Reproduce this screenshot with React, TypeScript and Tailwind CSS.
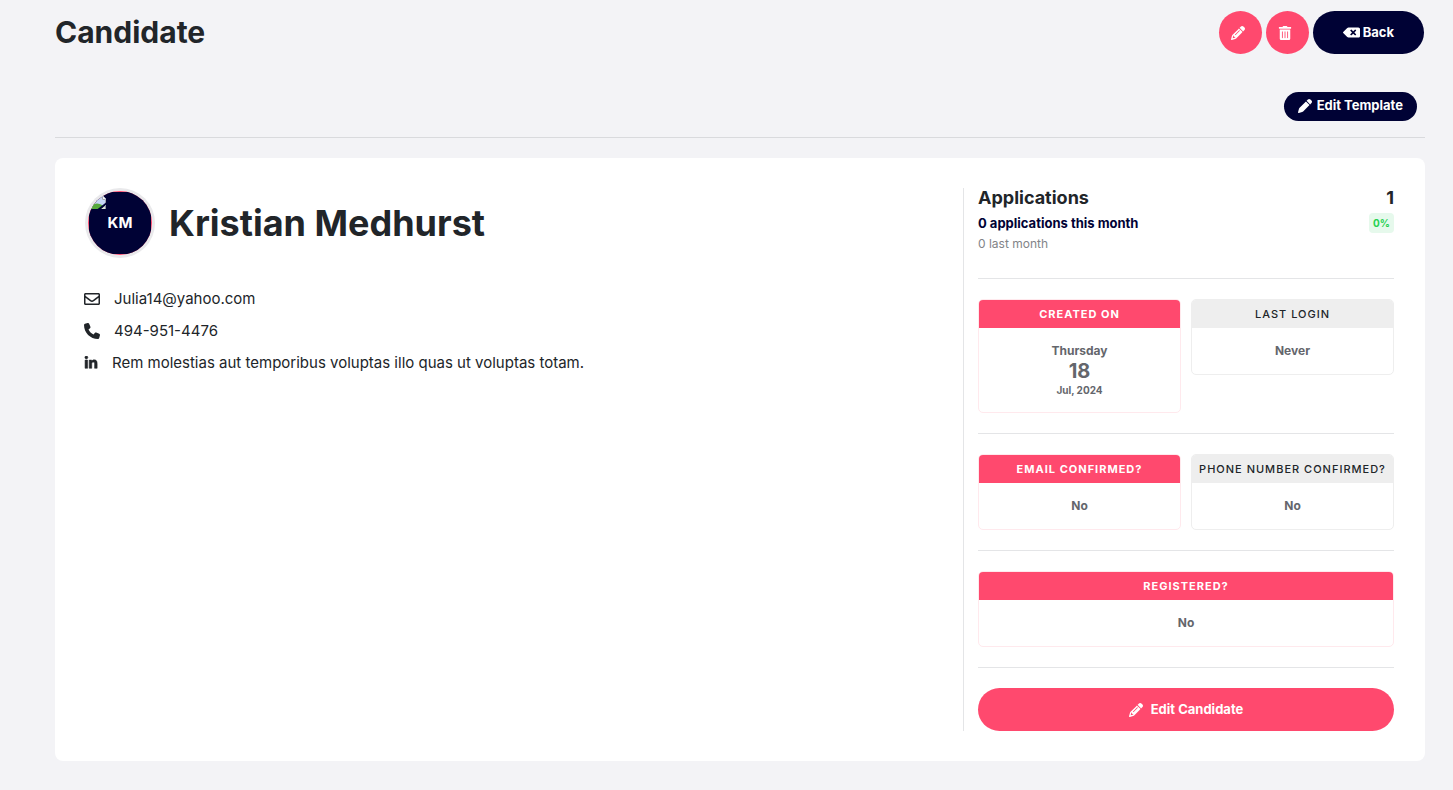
import type { ReactNode } from "react";
import { FaBackspace, FaLinkedinIn, FaRegEnvelope, FaTrashAlt } from "react-icons/fa";
import { FaPen, FaPencil, FaPhone } from "react-icons/fa6";

const CANDIDATE = {
  name: "Kristian Medhurst",
  initials: "KM",
  email: "Julia14@yahoo.com",
  phone: "494-951-4476",
  linkedin: "Rem molestias aut temporibus voluptas illo quas ut voluptas totam.",
};

function Avatar({ initials }: { initials: string }) {
  return (
    <div className="relative size-[70px] shrink-0">
      <svg viewBox="0 0 70 70" className="size-full" aria-hidden="true">
        <defs>
          <clipPath id="avatar-clip">
            <circle cx="35" cy="35" r="32" />
          </clipPath>
          <clipPath id="photo-clip">
            <path d="M5 8h13l3 3v10H5z" />
          </clipPath>
        </defs>
        <circle cx="35" cy="35" r="35" fill="#e9e9eb" />
        <g clipPath="url(#avatar-clip)">
          <rect x="3" y="3" width="64" height="64" fill="#ff496e" />
          <rect x="4" y="4" width="62" height="62" fill="#000235" />
          {/* missing photo */}
          <g clipPath="url(#photo-clip)">
            <rect x="5" y="8" width="16" height="13" fill="#c6d6f5" />
            <ellipse cx="12" cy="21" rx="7" ry="5.500" fill="#56a93c" />
            <path d="M17 8v4h4V8z" fill="#f4f5f7" />
            <path d="M5 8.500h12.500v3h3V21" fill="none" stroke="#a3a8b0" />
            <path d="M16 21l5-4v4z" fill="#dfe3dc" />
            <path d="M13 22l9-7" stroke="#000235" strokeWidth="2" />
            <path d="M20.500 17v4" stroke="#8d949c" />
          </g>
        </g>
      </svg>
      <span className="absolute inset-0 flex items-center justify-center text-[15px] font-bold text-white">
        {initials}
      </span>
    </div>
  );
}

function ContactRow({ icon, children }: { icon: ReactNode; children: ReactNode }) {
  return (
    <li className="flex items-center gap-[14px] text-[15px] leading-5">
      {icon}
      {children}
    </li>
  );
}

function InfoCard({ title, muted = false, children }: { title: string; muted?: boolean; children: ReactNode }) {
  return (
    <div
      className={`min-w-0 flex-1 self-start overflow-hidden rounded-[5px] border ${
        muted ? "border-[#eeeeee]" : "border-[#ffe9ed]"
      }`}
    >
      <h3
        className={`text-center text-[11px] leading-7 tracking-[1px] whitespace-nowrap uppercase ${
          muted ? "bg-[#eeeeee] font-medium text-[#212529]" : "bg-[#ff496e] font-bold text-white"
        }`}
      >
        {title}
      </h3>
      <div className="flex flex-col items-center py-[13px] text-xs leading-5 font-bold text-[#64666c]">
        {children}
      </div>
    </div>
  );
}

function Divider() {
  return <hr className="my-5 border-t border-[#e4e5e7]" />;
}

export default function App() {
  return (
    <div className="min-h-screen bg-[#f3f3f6] pt-[11px] pr-7 pb-7 pl-[55px] font-[Inter,sans-serif] text-[#212529]">
      {/* Header */}
      <header className="flex items-center justify-between pr-px">
        <h1 className="text-[30px] leading-[43px] font-bold">Candidate</h1>
        <div className="flex gap-1 text-[13px] font-bold text-white">
          <button aria-label="Edit" className="flex size-[43px] items-center rounded-full bg-[#ff496e] pl-3">
            <FaPencil className="size-[14px]" />
          </button>
          <button aria-label="Delete" className="flex size-[43px] items-center rounded-full bg-[#ff496e] pl-3">
            <FaTrashAlt className="size-[14px]" />
          </button>
          <button className="flex h-[43px] items-center gap-[3px] rounded-full bg-[#000235] px-[30px]">
            <FaBackspace className="size-[17px]" />
            Back
          </button>
        </div>
      </header>

      <div className="mt-[38px] flex justify-end border-b border-[#d9dadd] pr-2 pb-4">
        <button className="flex h-[29px] items-center gap-[5px] rounded-full bg-[#000235] px-[14px] pb-[2px] text-[13px] font-bold text-white">
          <FaPen className="size-[14px]" />
          Edit Template
        </button>
      </div>

      <main className="mt-5 flex rounded-lg bg-white py-[30px] pr-[31px] pl-[29px]">
        <section className="min-w-0 flex-1">
          <div className="flex items-center gap-[14px] pl-px">
            <Avatar initials={CANDIDATE.initials} />
            <h2 className="text-4xl font-bold">{CANDIDATE.name}</h2>
          </div>
          <ul className="mt-[31px] flex flex-col gap-3">
            <ContactRow icon={<FaRegEnvelope className="size-4" />}>{CANDIDATE.email}</ContactRow>
            <ContactRow icon={<FaPhone className="size-4" />}>{CANDIDATE.phone}</ContactRow>
            <ContactRow icon={<FaLinkedinIn className="size-[14px] stroke-current" strokeWidth={20} />}>
              {CANDIDATE.linkedin}
            </ContactRow>
          </ul>
        </section>

        <aside className="w-[32.9%] border-l border-[#e4e5e7] pl-[14px]">
          <div className="flex justify-between text-lg leading-5 font-bold">
            <h2>Applications</h2>
            <span>1</span>
          </div>
          <div className="mt-[5px] flex justify-between">
            <span className="text-[13px] leading-5 font-bold text-[#000235]">0 applications this month</span>
            <span className="rounded bg-[#e6f9ec] px-1 text-[10px] leading-5 font-bold text-[#28d152]">0%</span>
          </div>
          <p className="mb-6 pt-px text-xs leading-5 text-[#828488]">0 last month</p>

          <Divider />
          <div className="flex gap-[10px]">
            <InfoCard title="Created on">
              <span>Thursday</span>
              <span className="text-xl leading-5">18</span>
              <span className="text-[10px] leading-[18px]">Jul, 2024</span>
            </InfoCard>
            <InfoCard title="Last login" muted>
              Never
            </InfoCard>
          </div>

          <Divider />
          <div className="flex gap-[10px]">
            <InfoCard title="Email confirmed?">No</InfoCard>
            <InfoCard title="Phone number confirmed?" muted>
              No
            </InfoCard>
          </div>

          <Divider />
          <div className="flex">
            <InfoCard title="Registered?">No</InfoCard>
          </div>

          <Divider />
          <button className="flex h-[43px] w-full items-center justify-center gap-2 rounded-full bg-[#ff496e] text-[13px] font-bold text-white">
            <FaPencil className="size-[14px]" />
            Edit Candidate
          </button>
        </aside>
      </main>
    </div>
  );
}
